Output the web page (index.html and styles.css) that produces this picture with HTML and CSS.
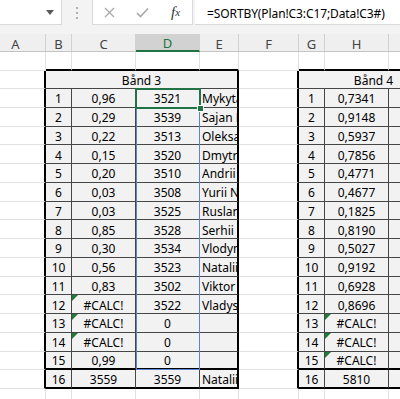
FILE: index.html
```html
<!DOCTYPE html>
<html lang="en">
<head>
  <meta charset="UTF-8" />
  <title>Bånd – SORTBY</title>
  <link rel="stylesheet" href="styles.css">
</head>
<body>

<div class="topbar">
  <div class="namebox">
    <svg width="8" height="5" viewBox="0 0 8 5"><path d="M0 0 L8 0 L4 5 Z" fill="#5a5a5a"/></svg>
  </div>
  <div class="grip">
    <svg width="2" height="12" viewBox="0 0 2 12"><rect x="0" y="0" width="2" height="2" fill="#b0b0b0"/><rect x="0" y="5" width="2" height="2" fill="#b0b0b0"/><rect x="0" y="10" width="2" height="2" fill="#b0b0b0"/></svg>
  </div>
  <div class="fxbox">
    <span class="slot">
      <svg width="11" height="11" viewBox="0 0 11 11"><path d="M1 1 L10 10 M10 1 L1 10" stroke="#a8a8a8" stroke-width="1.3" fill="none"/></svg>
    </span>
    <span class="slot">
      <svg width="13" height="11" viewBox="0 0 13 11"><path d="M1 6 L4.5 9.5 L12 1.5" stroke="#a8a8a8" stroke-width="1.6" fill="none"/></svg>
    </span>
    <span class="slot fx">f<small>x</small></span>
  </div>
  <div class="formula">=SORTBY(Plan!C3:C17;Data!C3#)</div>
</div>

<div class="colheads">
  <div class="hd ca">A</div>
  <div class="hd cb">B</div>
  <div class="hd cc">C</div>
  <div class="hd cd on">D</div>
  <div class="hd ce">E</div>
  <div class="hd cf">F</div>
  <div class="hd cg">G</div>
  <div class="hd ch">H</div>
  <div class="hd ci"></div>
</div>

<div class="sheet" id="sheet">
  <div id="rows"></div>
  <div class="spill"></div>
  <div class="active"></div>
  <div class="handle"></div>
</div>

<script>
  const band3 = [
    ["1", "0,96", "3521", "Mykyta Hrytsenko"],
    ["2", "0,29", "3539", "Sajan Kumar"],
    ["3", "0,22", "3513", "Oleksandr"],
    ["4", "0,15", "3520", "Dmytro"],
    ["5", "0,20", "3510", "Andrii Koval"],
    ["6", "0,03", "3508", "Yurii Nazar"],
    ["7", "0,03", "3525", "Ruslan"],
    ["8", "0,85", "3528", "Serhii Bondar"],
    ["9", "0,30", "3534", "Vlodymyr"],
    ["10", "0,56", "3523", "Natalii"],
    ["11", "0,83", "3502", "Viktor"],
    ["12", "#CALC!", "3522", "Vladyslav"],
    ["13", "#CALC!", "0", ""],
    ["14", "#CALC!", "0", ""],
    ["15", "0,99", "0", ""],
    ["16", "3559", "3559", "Natalii"]
  ];

  const band4 = [
    ["1", "0,7341"], ["2", "0,9148"], ["3", "0,5937"], ["4", "0,7856"],
    ["5", "0,4771"], ["6", "0,4677"], ["7", "0,1825"], ["8", "0,8190"],
    ["9", "0,5027"], ["10", "0,9192"], ["11", "0,6928"], ["12", "0,8696"],
    ["13", "#CALC!"], ["14", "#CALC!"], ["15", "#CALC!"], ["16", "5810"]
  ];

  function cell(cls, text) {
    return `<div class="cell ${cls}">${text || ""}</div>`;
  }

  function showSheet() {
    let html = "";

    // empty row above the two tables
    html += `<div class="row r0">` +
      cell("ca") + cell("cb above") + cell("cc above") + cell("cd above") + cell("ce above") +
      cell("cf") + cell("cg above") + cell("ch above") + cell("ci above") + `</div>`;

    // merged title row
    html += `<div class="row rband">` +
      cell("ca edge") + cell("t band band3", "Bånd 3") +
      cell("cf edge") + cell("t band band4", "Bånd 4") + `</div>`;

    for (let i = 0; i < band3.length; i++) {
      const a = band3[i];
      const b = band4[i];
      const x = i >= 14 ? " thick" : "";
      const warnA = a[1] === "#CALC!" ? " warn" : "";
      const warnB = b[1] === "#CALC!" ? " warn" : "";
      html += `<div class="row">` +
        cell("ca edge") +
        cell("cb t" + x, a[0]) +
        cell("cc t" + x + warnA, a[1]) +
        cell("cd t" + x, a[2]) +
        cell("ce t name" + x, a[3]) +
        cell("cf edge") +
        cell("cg t" + x, b[0]) +
        cell("ch t" + x + warnB, b[1]) +
        cell("ci t" + x) +
        `</div>`;
    }

    html += `<div class="row rlast">` +
      cell("ca") + cell("cb") + cell("cc") + cell("cd") + cell("ce") +
      cell("cf") + cell("cg") + cell("ch") + cell("ci") + `</div>`;

    document.getElementById("rows").innerHTML = html;
  }

  showSheet();
</script>

</body>
</html>
```

FILE: styles.css
```css
* {
  box-sizing: border-box;
}

body {
  margin: 0;
  width: 400px;
  height: 399px;
  overflow: hidden;
  background: #fff;
  font-family: "Noto Sans", "Liberation Sans", sans-serif;
  color: #000;
}

/* formula bar */
.topbar {
  display: flex;
  align-items: flex-start;
  height: 34px;
  background: #f3f3f3;
}

.namebox {
  width: 62px;
  height: 25px;
  background: #fff;
  border-right: 1px solid #dadada;
  border-bottom: 1px solid #dadada;
  display: flex;
  justify-content: flex-end;
  align-items: center;
  padding-right: 7px;
}

.grip {
  width: 30px;
  height: 25px;
  display: flex;
  justify-content: center;
  align-items: center;
}

.fxbox {
  width: 101px;
  height: 25px;
  background: #fff;
  border: 1px solid #dadada;
  border-top: none;
  display: flex;
  align-items: center;
}

.slot {
  width: 33px;
  display: flex;
  justify-content: center;
  align-items: center;
}

.fx {
  font-family: "Liberation Serif", serif;
  font-style: italic;
  font-size: 15px;
  color: #333;
}

.fx small {
  font-size: 11px;
}

.formula {
  flex: 1;
  margin-left: 2px;
  height: 25px;
  background: #fff;
  border-bottom: 1px solid #dadada;
  padding-left: 12px;
  padding-top: 3px;
  font-size: 12px;
  letter-spacing: -0.1px;
  line-height: 22px;
  white-space: nowrap;
  overflow: hidden;
}

/* column letters */
.colheads {
  display: flex;
  height: 18px;
  background: #efefef;
  border-bottom: 1px solid #c4c4c4;
}

.hd {
  flex: none;
  border-right: 1px solid #d2d2d2;
  display: flex;
  justify-content: center;
  align-items: center;
  padding-top: 2px;
  font-size: 13px;
  color: #444;
}

.hd.ca {
  padding-right: 14px;
}

.hd.on {
  background: #d2d2d2;
  color: #217346;
  border-bottom: 2px solid #217346;
  margin-bottom: -1px;
}

.ca { width: 46px; }
.cb { width: 26px; }
.cc { width: 64px; }
.cd { width: 64px; }
.ce { width: 39px; }
.cf { width: 60px; }
.cg { width: 26px; }
.ch { width: 64px; }
.ci { width: 60px; }

/* sheet body */
.sheet {
  position: relative;
  height: 347px;
  overflow: hidden;
}

.row {
  display: flex;
  height: 18.75px;
}

.r0 {
  height: 19px;
}

.rband {
  height: 18px;
}

.rlast {
  height: 30px;
}

.cell {
  flex: none;
  position: relative;
  display: flex;
  justify-content: center;
  align-items: center;
  padding-top: 2px;
  border-right: 1px solid #e1e1e1;
  border-bottom: 1px solid #e1e1e1;
  font-size: 12px;
  white-space: nowrap;
  overflow: hidden;
}

.above {
  border-bottom: 2px solid #000;
}

.edge {
  border-right: 2px solid #000;
}

.t {
  background: #f2f2f2;
  border-right-color: #464646;
  border-bottom-color: #464646;
}

.ce.t,
.band3 {
  border-right: 2px solid #000;
}

.ci.t {
  border-right: none;
}

.thick {
  border-bottom: 2px solid #000;
}

.band3 {
  width: 193px;
}

.band4 {
  width: 150px;
}

.name {
  justify-content: flex-start;
  padding-left: 2px;
}

.warn::before {
  content: "";
  position: absolute;
  left: 0;
  top: 0;
  border-top: 6px solid #1e7a36;
  border-right: 6px solid transparent;
}

/* selection */
.spill {
  position: absolute;
  left: 136px;
  top: 37px;
  width: 64px;
  height: 281px;
  border: 1px solid #5b85d0;
}

.active {
  position: absolute;
  left: 135px;
  top: 36px;
  width: 66px;
  height: 21px;
  border: 2px solid #217346;
}

.handle {
  position: absolute;
  left: 197px;
  top: 53px;
  width: 7px;
  height: 7px;
  background: #217346;
  border: 1px solid #fff;
}
```
